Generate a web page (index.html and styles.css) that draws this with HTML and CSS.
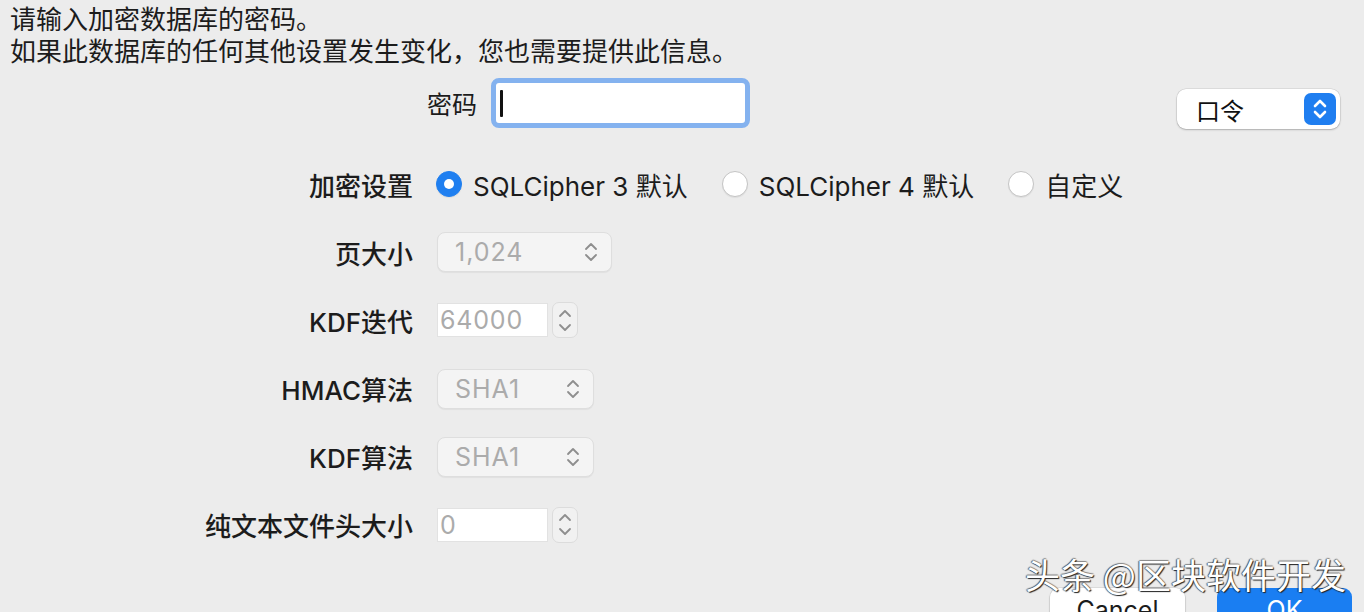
FILE: index.html
```html
<!DOCTYPE html>
<html lang="zh-CN">
<head>
<meta charset="utf-8">
<title>加密数据库</title>
<link rel="stylesheet" href="styles.css">
</head>
<body>
<div class="dialog">
  <div class="intro">
    <p class="intro-line">请输入加密数据库的密码。</p>
    <p class="intro-line">如果此数据库的任何其他设置发生变化，您也需要提供此信息。</p>
  </div>

  <div class="pw-row">
    <div class="pw-label">密码</div>
    <div class="pw-field"><span class="caret"></span></div>
    <div class="mode-popup">
      <span class="mode-text">口令</span>
      <span class="mode-btn">
        <svg width="18" height="24" viewBox="0 0 18 24"><path d="M4 9 L9 4 L14 9 M4 15 L9 20 L14 15" fill="none" stroke="#fff" stroke-width="2.6" stroke-linecap="round" stroke-linejoin="round"/></svg>
      </span>
    </div>
  </div>

  <div class="form">
    <div class="label">加密设置</div>
    <div class="radios">
      <span class="option"><span class="radio on"></span>SQLCipher 3 默认</span>
      <span class="option"><span class="radio"></span>SQLCipher 4 默认</span>
      <span class="option"><span class="radio"></span>自定义</span>
    </div>

    <div class="label">页大小</div>
    <div class="ctrl">
      <div class="popup w-page"><span>1,024</span>
        <svg class="chev" width="14" height="22" viewBox="0 0 14 22"><path d="M2 8 L7 3 L12 8 M2 14 L7 19 L12 14" fill="none" stroke="#8e8e8e" stroke-width="1.8" stroke-linecap="round" stroke-linejoin="round"/></svg>
      </div>
    </div>

    <div class="label">KDF迭代</div>
    <div class="ctrl">
      <div class="field">64000</div>
      <div class="stepper">
        <svg width="14" height="10" viewBox="0 0 14 10"><path d="M2 7 L7 2 L12 7" fill="none" stroke="#8e8e8e" stroke-width="1.8" stroke-linecap="round" stroke-linejoin="round"/></svg>
        <svg width="14" height="10" viewBox="0 0 14 10"><path d="M2 3 L7 8 L12 3" fill="none" stroke="#8e8e8e" stroke-width="1.8" stroke-linecap="round" stroke-linejoin="round"/></svg>
      </div>
    </div>

    <div class="label">HMAC算法</div>
    <div class="ctrl">
      <div class="popup w-sha"><span>SHA1</span>
        <svg class="chev" width="14" height="22" viewBox="0 0 14 22"><path d="M2 8 L7 3 L12 8 M2 14 L7 19 L12 14" fill="none" stroke="#8e8e8e" stroke-width="1.8" stroke-linecap="round" stroke-linejoin="round"/></svg>
      </div>
    </div>

    <div class="label">KDF算法</div>
    <div class="ctrl">
      <div class="popup w-sha"><span>SHA1</span>
        <svg class="chev" width="14" height="22" viewBox="0 0 14 22"><path d="M2 8 L7 3 L12 8 M2 14 L7 19 L12 14" fill="none" stroke="#8e8e8e" stroke-width="1.8" stroke-linecap="round" stroke-linejoin="round"/></svg>
      </div>
    </div>

    <div class="label">纯文本文件头大小</div>
    <div class="ctrl">
      <div class="field">0</div>
      <div class="stepper">
        <svg width="14" height="10" viewBox="0 0 14 10"><path d="M2 7 L7 2 L12 7" fill="none" stroke="#8e8e8e" stroke-width="1.8" stroke-linecap="round" stroke-linejoin="round"/></svg>
        <svg width="14" height="10" viewBox="0 0 14 10"><path d="M2 3 L7 8 L12 3" fill="none" stroke="#8e8e8e" stroke-width="1.8" stroke-linecap="round" stroke-linejoin="round"/></svg>
      </div>
    </div>
  </div>

  <div class="footer">
    <button class="btn cancel">Cancel</button>
    <button class="btn ok">OK</button>
  </div>

  <div class="watermark">头条 @区块软件开发</div>
</div>
</body>
</html>
```
FILE: styles.css
```css
html, body {
  margin: 0;
  padding: 0;
  height: 612px;
  overflow: hidden;
  background: #ececec;
}

.dialog {
  position: relative;
  height: 612px;
  padding: 0 0 0 10px;
  box-sizing: border-box;
  font-family: "Inter", "Noto Sans CJK SC", sans-serif;
  color: #1c1c1c;
}

.intro {
  padding-top: 2px;
  font-family: "Noto Sans CJK SC", sans-serif;
  font-size: 26px;
}

.intro-line {
  margin: 0;
  height: 32px;
  line-height: 32px;
  white-space: nowrap;
}

.pw-row {
  display: flex;
  align-items: center;
  margin-top: 12px;
  height: 50px;
}

.pw-label {
  width: 467px;
  text-align: right;
  font-family: "Noto Sans CJK SC", sans-serif;
  font-size: 25px;
}

.pw-field {
  margin-left: 14px;
  width: 259px;
  height: 50px;
  box-sizing: border-box;
  border: 5px solid #84b2ef;
  border-radius: 8px;
  background: #fff;
  display: flex;
  align-items: center;
  padding-left: 4px;
}

.caret {
  width: 3px;
  height: 27px;
  background: #111;
  border-radius: 1px;
}

.mode-popup {
  margin-left: auto;
  margin-right: 24px;
  margin-top: 12px;
  width: 163px;
  height: 40px;
  box-sizing: border-box;
  background: #fff;
  border-radius: 9px;
  box-shadow: 0 1px 2px rgba(0,0,0,0.22), 0 0 0 0.5px rgba(0,0,0,0.12);
  display: flex;
  align-items: center;
  justify-content: space-between;
  padding: 0 4px 0 19px;
}

.mode-text {
  font-family: "Noto Sans CJK SC", sans-serif;
  font-size: 24px;
  color: #111;
}

.mode-btn {
  width: 32px;
  height: 32px;
  border-radius: 7px;
  background: #1f7ef0;
  display: flex;
  align-items: center;
  justify-content: center;
}

.form {
  display: grid;
  grid-template-columns: 403px 1fr;
  grid-auto-rows: 44px;
  column-gap: 24px;
  row-gap: 24.2px;
  align-items: center;
  margin-top: 34px;
}

.label {
  text-align: right;
  font-size: 26px;
  font-weight: 500;
  color: #1c1c1c;
  white-space: nowrap;
}

.radios {
  display: flex;
  align-items: center;
  font-size: 26px;
  color: #1c1c1c;
}

.option {
  display: flex;
  align-items: center;
  margin-right: 35px;
  white-space: nowrap;
}

.radio {
  width: 26px;
  height: 26px;
  box-sizing: border-box;
  border-radius: 50%;
  background: #fff;
  border: 1px solid #c4c4c4;
  box-shadow: 0 1px 1px rgba(0,0,0,0.06);
  margin-right: 11px;
  margin-left: -1px;
  position: relative;
}

.radio.on {
  background: #1f7ff0;
  border-color: #1f7ff0;
}

.radio.on::after {
  content: "";
  position: absolute;
  left: 7px;
  top: 7px;
  width: 10px;
  height: 10px;
  border-radius: 50%;
  background: #fff;
}

.ctrl {
  display: flex;
  align-items: center;
}

.popup {
  height: 40px;
  box-sizing: border-box;
  border-radius: 8px;
  background: #f4f4f4;
  border: 1px solid #dedede;
  box-shadow: 0 1px 1px rgba(0,0,0,0.05);
  display: flex;
  align-items: center;
  justify-content: space-between;
  padding: 0 13px 0 17px;
  font-size: 25px;
  letter-spacing: 1px;
  color: #ababab;
}

.w-page { width: 175px; }
.w-sha { width: 157px; }

.field {
  width: 111px;
  height: 34px;
  box-sizing: border-box;
  background: #fff;
  border: 1px solid #e2e2e2;
  display: flex;
  align-items: center;
  padding-left: 2px;
  font-size: 25px;
  letter-spacing: 0.8px;
  color: #ababab;
}

.stepper {
  margin-left: 4px;
  width: 26px;
  height: 36px;
  box-sizing: border-box;
  border-radius: 7px;
  border: 1px solid #dcdcdc;
  background: #f1f1f1;
  display: flex;
  flex-direction: column;
  align-items: center;
  justify-content: center;
  gap: 3px;
}

.footer {
  display: flex;
  justify-content: flex-end;
  gap: 32px;
  margin-top: 41px;
  padding-right: 12px;
}

.btn {
  width: 135px;
  height: 44px;
  border: none;
  border-radius: 9px;
  font-family: "Inter", sans-serif;
  font-size: 25px;
  padding: 0;
  line-height: 44px;
}

.btn.cancel {
  background: #fff;
  color: #1c1c1c;
  box-shadow: 0 1px 2px rgba(0,0,0,0.22), 0 0 0 0.5px rgba(0,0,0,0.12);
}

.btn.ok {
  background: #1a7ef2;
  color: #fff;
}

.watermark {
  position: absolute;
  left: 1025px;
  top: 554px;
  font-family: "Noto Sans CJK SC", sans-serif;
  font-size: 35px;
  line-height: 40px;
  color: #fff;
  text-shadow: 1px 1px 1px #222, -1px 0 1px rgba(0,0,0,0.6), 0 -1px 1px rgba(0,0,0,0.4);
  white-space: nowrap;
}
```
